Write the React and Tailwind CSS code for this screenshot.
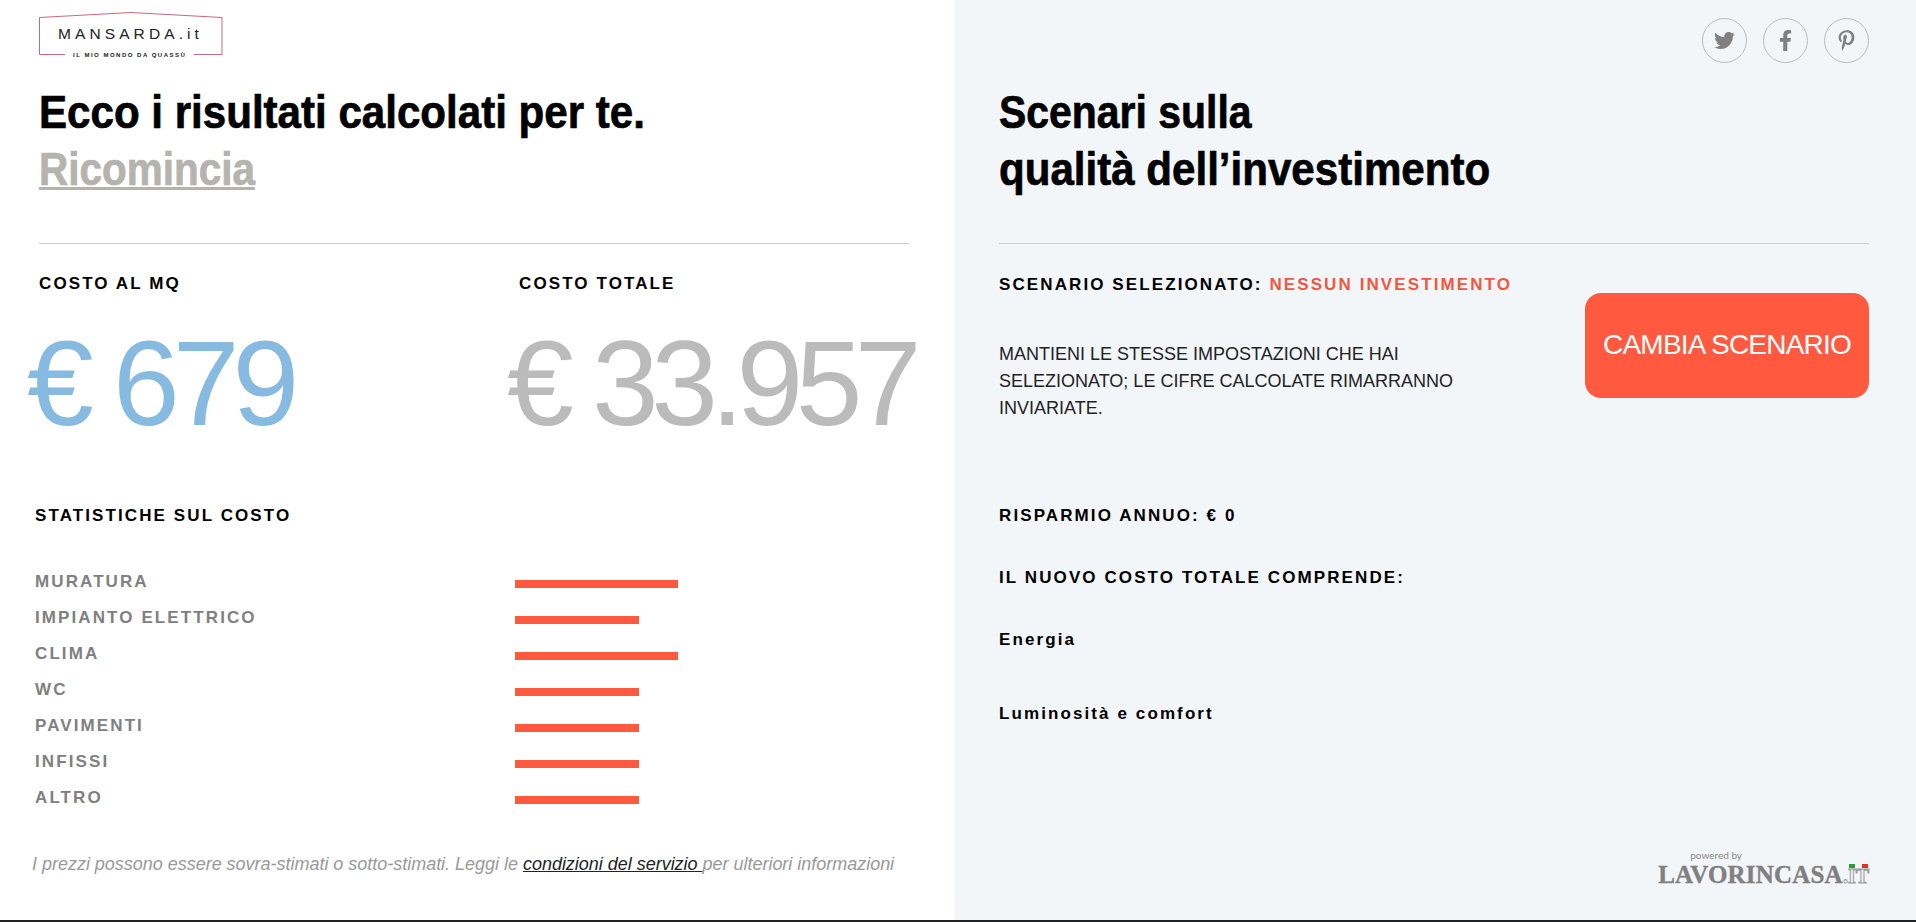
import { FaTwitter, FaFacebookF, FaPinterestP } from 'react-icons/fa';

const stats = [
  { name: 'MURATURA', w: 'w-[163px]' },
  { name: 'IMPIANTO ELETTRICO', w: 'w-[124px]' },
  { name: 'CLIMA', w: 'w-[163px]' },
  { name: 'WC', w: 'w-[124px]' },
  { name: 'PAVIMENTI', w: 'w-[124px]' },
  { name: 'INFISSI', w: 'w-[124px]' },
  { name: 'ALTRO', w: 'w-[124px]' },
];

// no condensed face installed, so Arial metrics get squeezed and thickened
const headingLine = 'origin-left whitespace-nowrap text-[46px] leading-[57px] font-bold [-webkit-text-stroke:0.7px_currentColor]';
const label = 'text-[17px] leading-[20px] font-bold tracking-[2.1px]';

function MansardaLogo() {
  return (
    <svg width="184" height="46" viewBox="0 0 184 46" className="block">
      <path d="M26 42.5 H0.5 V5.5 L92 0.5 L183 5.5 V42.5 H155" fill="none" stroke="#c56a7a" strokeWidth="1" />
      <text x="19" y="27" fontFamily="Liberation Sans" fontSize="15.5" letterSpacing="4.1" fill="#222">MANSARDA.it</text>
      <text x="34" y="45" fontFamily="Liberation Sans" fontWeight="700" fontSize="6" letterSpacing="1.5" fill="#222">IL MIO MONDO DA QUASSÙ</text>
    </svg>
  );
}

function LavorincasaLogo() {
  return (
    <div className="flex flex-col items-start">
      <span className="ml-[32px] text-[10px] leading-[12px] text-[#888] font-['Lato',sans-serif]">powered by</span>
      <div className="relative mt-[3px] flex items-baseline h-[22px] leading-[22px] font-['Liberation_Serif',serif] font-bold text-[25px] text-[#808080]">
        <span className="tracking-[0.2px] [-webkit-text-stroke:0.4px_#808080]">LAVORINCASA</span>
        <span className="text-[20px] text-[#f3f6f9] [-webkit-text-stroke:1px_#9a9a9a]">.IT</span>
        <span className="absolute right-[14px] top-[0px] w-[6px] h-[4px] bg-[#2f9a3c]" />
        <span className="absolute right-[1px] top-[0px] w-[6px] h-[4px] bg-[#e0321c]" />
      </div>
    </div>
  );
}

function SocialIcon({ children }) {
  return (
    <div className="w-[45px] h-[45px] rounded-full border border-[#bbbbbb] flex items-center justify-center text-[#808080] text-[21px]">
      {children}
    </div>
  );
}

export default function App() {
  return (
    <div className="flex h-[922px] overflow-hidden border-b-2 border-[#222] font-['Liberation_Sans',sans-serif] bg-white">
      {/* left column */}
      <div className="w-[955px] shrink-0 pl-[39px] pr-[46px] pt-[12px]">
        <MansardaLogo />
        <h1 className="mt-[26px] text-black">
          <div className={`${headingLine} scale-x-[0.915]`}>Ecco i risultati calcolati per te.</div>
          <a className={`${headingLine} block scale-x-[0.88] text-[#b5b3ae] underline decoration-[3px]`}>Ricomincia</a>
        </h1>
        <hr className="mt-[45px] border-[#cccccc]" />

        <div className="grid grid-cols-[480px_1fr] mt-[30px]">
          <div className={`${label} text-black`}>COSTO AL MQ</div>
          <div className={`${label} text-black`}>COSTO TOTALE</div>
          <div className="-ml-[12px] mt-[19px] whitespace-nowrap text-[120px] leading-[140px] tracking-[-7px] text-[#86bae0]">€ 679</div>
          <div className="-ml-[12px] mt-[19px] whitespace-nowrap text-[120px] leading-[140px] tracking-[-7.5px] text-[#bbbbbb]">€ 33.957</div>
        </div>

        <div className="-ml-[4px] mt-[53px]">
          <div className={`${label} text-black`}>STATISTICHE SUL COSTO</div>
          <div className="mt-[46px] flex flex-col gap-[16px]">
            {stats.map((s) => (
              <div key={s.name} className="flex h-[20px] items-center">
                <div className={`w-[480px] ${label} text-[#808080]`}>{s.name}</div>
                <div className={`${s.w} h-[8px] mt-[4px] bg-[#ff5a40]`} />
              </div>
            ))}
          </div>
        </div>

        <p className="-ml-[7px] mt-[44px] text-[18px] leading-[24px] italic tracking-[-0.02px] text-[#999999] whitespace-nowrap">
          I prezzi possono essere sovra-stimati o sotto-stimati. Leggi le{' '}
          <a className="text-[#222] underline">condizioni del servizio </a>
          per ulteriori informazioni
        </p>
      </div>

      {/* right column */}
      <div className="flex-1 flex flex-col bg-[#f3f6f9] pl-[44px] pr-[47px] pt-[18px] pb-[34px]">
        <div className="flex justify-end gap-[16px]">
          <SocialIcon><FaTwitter /></SocialIcon>
          <SocialIcon><FaFacebookF /></SocialIcon>
          <SocialIcon><FaPinterestP /></SocialIcon>
        </div>
        <h2 className="mt-[21px] text-black">
          <div className={`${headingLine} scale-x-[0.89]`}>Scenari sulla</div>
          <div className={`${headingLine} scale-x-[0.915]`}>qualità dell’investimento</div>
        </h2>
        <hr className="mt-[45px] border-[#cccccc]" />

        <div className="flex justify-between mt-[31px]">
          <div className="w-[520px]">
            <div className={`${label} text-black whitespace-nowrap`}>
              SCENARIO SELEZIONATO: <span className="text-[#f0583f]">NESSUN INVESTIMENTO</span>
            </div>
            <p className="mt-[46px] w-[480px] text-[18px] leading-[27px] text-[#222]">
              MANTIENI LE STESSE IMPOSTAZIONI CHE HAI SELEZIONATO; LE CIFRE CALCOLATE RIMARRANNO INVIARIATE.
            </p>
          </div>
          <button className="mt-[18px] w-[284px] h-[105px] pb-[2px] rounded-[16px] bg-[#ff5a40] text-white text-[28px] tracking-[-0.8px]">
            CAMBIA SCENARIO
          </button>
        </div>

        <div className={`mt-[84px] ${label} text-black`}>RISPARMIO ANNUO: € 0</div>
        <div className={`mt-[42px] ${label} text-black`}>IL NUOVO COSTO TOTALE COMPRENDE:</div>
        <div className={`mt-[42px] ${label} text-black`}>Energia</div>
        <div className={`mt-[54px] ${label} text-black`}>Luminosità e comfort</div>

        <div className="mt-auto flex justify-end">
          <LavorincasaLogo />
        </div>
      </div>
    </div>
  );
}
